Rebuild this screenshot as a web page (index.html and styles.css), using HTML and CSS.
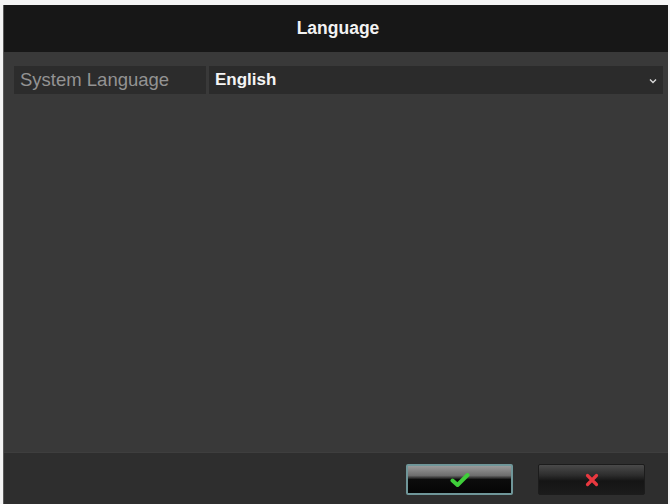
FILE: index.html
```html
<!DOCTYPE html>
<html>
<head>
<meta charset="utf-8">
<link rel="stylesheet" href="styles.css">
</head>
<body>
<div class="window">
  <div class="titlebar">Language</div>
  <div class="content">
    <div class="row">
      <div class="label">System Language</div>
      <div class="select">
        <span class="value">English</span>
        <svg class="chev" width="8" height="6" viewBox="0 0 8 6"><path d="M1 1.5 L4 4.5 L7 1.5" fill="none" stroke="#d8d8d8" stroke-width="1.4"/></svg>
      </div>
    </div>
  </div>
  <div class="footer">
    <button class="btn ok">
      <svg width="20" height="16" viewBox="0 0 20 16"><path d="M2.5 8.5 L7.5 13 L17.5 3" fill="none" stroke="#3fcf3a" stroke-width="4" stroke-linecap="round" stroke-linejoin="round"/></svg>
    </button>
    <button class="btn cancel">
      <svg width="14" height="14" viewBox="0 0 14 14"><path d="M2.5 2.5 L11.5 11.5 M11.5 2.5 L2.5 11.5" stroke="#e8383f" stroke-width="3.2" stroke-linecap="round"/></svg>
    </button>
  </div>
</div>
</body>
</html>
```

FILE: styles.css
```css
html, body {
  margin: 0;
  padding: 0;
  background: #f4f4f4;
}
body {
  width: 670px;
  height: 504px;
  padding: 5px 2px 0 3px;
  box-sizing: border-box;
  font-family: "Liberation Sans", Arial, sans-serif;
}
.window {
  height: 499px;
  display: flex;
  flex-direction: column;
  background: #383838;
  border-left: 1px solid #5a5a5a;
}
.titlebar {
  height: 47px;
  flex: none;
  background: #171717;
  color: #f2f2f2;
  font-size: 17.5px;
  font-weight: bold;
  display: flex;
  align-items: center;
  justify-content: center;
  padding-left: 4px;
}
.content {
  flex: 1;
  padding: 14px 5px 0 10px;
  background: #393939;
}
.row {
  height: 28px;
  display: flex;
  gap: 3px;
}
.label {
  width: 192px;
  background: #2c2c2c;
  color: #939393;
  font-size: 18.5px;
  display: flex;
  align-items: center;
  padding-left: 6px;
  box-sizing: border-box;
}
.select {
  flex: 1;
  background: #2b2b2b;
  display: flex;
  align-items: center;
  justify-content: space-between;
  padding: 0 6px 0 6px;
}
.value {
  color: #f4f4f4;
  font-size: 17px;
  font-weight: bold;
}
.chev {
  margin-top: 2px;
}
.footer {
  height: 52px;
  flex: none;
  background: #2e2e2e;
  border-top: 1px solid #3e3e3e;
  display: flex;
  align-items: center;
  justify-content: flex-end;
  gap: 25px;
  padding: 2px 23px 0 0;
  box-sizing: border-box;
}
.btn {
  width: 107px;
  height: 31px;
  margin: 0;
  padding: 0;
  display: flex;
  align-items: center;
  justify-content: center;
  cursor: pointer;
}
.ok {
  border: 2px solid #6f9699;
  border-radius: 2px;
  background: linear-gradient(to bottom, #9a9a9a 0%, #6e6e6e 35%, #0c0c0c 50%, #050505 100%);
}
.cancel {
  border: 1px solid #1c1c1c;
  border-radius: 2px;
  background: linear-gradient(to bottom, #4a4a4a 0%, #2d2d2d 35%, #151515 55%, #1b1b1b 100%);
}
```
